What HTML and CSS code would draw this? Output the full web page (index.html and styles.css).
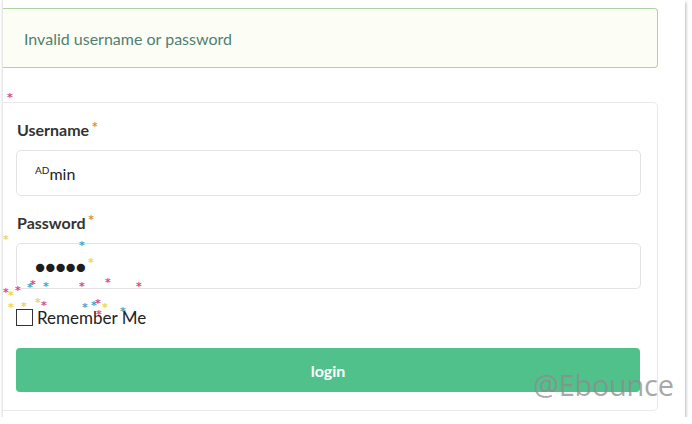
FILE: index.html
```html
<!DOCTYPE html>
<html>
<head>
<meta charset="utf-8">
<link rel="stylesheet" href="styles.css">
</head>
<body>
<div class="page">
  <div class="alert">Invalid username or password</div>
  <div class="card">
    <div class="field">
      <label class="label">Username<span class="req">*</span></label>
      <div class="input"><sup class="sup">AD</sup>min</div>
    </div>
    <div class="field field-2">
      <label class="label">Password<span class="req">*</span></label>
      <div class="input dots">●●●●●</div>
    </div>
    <div class="remember"><span class="box"></span><span class="rtext">Remember Me</span></div>
    <button class="btn">login</button>
  </div>
  <div class="watermark">@Ebounce</div>
  <span class="s pink" style="left:4px;top:92px">*</span>
  <span class="s yellow" style="left:0px;top:234px">*</span>
  <span class="s blue" style="left:76px;top:240px">*</span>
  <span class="s yellow" style="left:85px;top:257px">*</span>
  <span class="s pink" style="left:102px;top:277px">*</span>
  <span class="s pink" style="left:133px;top:281px">*</span>
  <span class="s pink" style="left:0px;top:287px">*</span>
  <span class="s yellow" style="left:5px;top:290px">*</span>
  <span class="s pink" style="left:12px;top:285px">*</span>
  <span class="s blue" style="left:24px;top:282px">*</span>
  <span class="s pink" style="left:27px;top:279px">*</span>
  <span class="s blue" style="left:40px;top:281px">*</span>
  <span class="s pink" style="left:76px;top:281px">*</span>
  <span class="s yellow" style="left:5px;top:302px">*</span>
  <span class="s yellow" style="left:18px;top:301px">*</span>
  <span class="s yellow" style="left:32px;top:297px">*</span>
  <span class="s pink" style="left:38px;top:300px">*</span>
  <span class="s blue" style="left:79px;top:302px">*</span>
  <span class="s blue" style="left:88px;top:300px">*</span>
  <span class="s yellow" style="left:99px;top:302px">*</span>
  <span class="s pink" style="left:92px;top:298px">*</span>
  <span class="s pink" style="left:93px;top:309px">*</span>
  <span class="s blue" style="left:117px;top:306px">*</span>
</div>
</body>
</html>
```
FILE: styles.css
```css
html, body {
  margin: 0;
  padding: 0;
  background: #ffffff;
}
body {
  font-family: Lato, "Open Sans", sans-serif;
}
.page {
  position: relative;
  margin-left: 2px;
  width: 683px;
  height: 417px;
  padding-top: 8px;
  box-sizing: border-box;
  border-left: 1px solid #e8e8e8;
  box-shadow: 1px 2px 3px rgba(0, 0, 0, 0.28);
}
.alert {
  margin-right: 27px;
  height: 60px;
  box-sizing: border-box;
  border: 1px solid #add4a0;
  border-left: none;
  border-radius: 0 4px 4px 0;
  background: #fcfef5;
  color: #4f7e72;
  font-size: 16px;
  padding-left: 21px;
  display: flex;
  align-items: center;
}
.card {
  margin-top: 34px;
  margin-right: 27px;
  height: 309px;
  box-sizing: border-box;
  border: 1px solid #e9e9e9;
  border-left: none;
  border-radius: 0 5px 5px 0;
  padding: 17px 16px 0 13px;
}
.field {
  display: flex;
  flex-direction: column;
}
.field-2 {
  margin-top: 17px;
}
.label {
  font-weight: bold;
  font-size: 16px;
  color: #333333;
  line-height: 20px;
  height: 20px;
  margin-left: 1px;
}
.req {
  color: #e08a3c;
  font-family: "DejaVu Sans", sans-serif;
  font-weight: bold;
  font-size: 10px;
  position: relative;
  top: -6px;
  margin-left: 3px;
}
.input {
  margin-top: 10px;
  height: 46px;
  box-sizing: border-box;
  border: 1px solid #e3e3e3;
  border-radius: 5px;
  padding-left: 18px;
  display: flex;
  align-items: center;
  font-size: 16px;
  color: #222222;
}
.sup {
  font-size: 10px;
  align-self: flex-start;
  margin-top: 13px;
}
.dots {
  font-size: 17px;
  color: #1e1e1e;
}
.remember {
  margin-top: 18px;
  height: 20px;
  display: flex;
  align-items: center;
}
.box {
  width: 17px;
  height: 17px;
  box-sizing: border-box;
  border: 1.5px solid #333333;
  margin-right: 4px;
}
.rtext {
  font-size: 17px;
  color: #222222;
}
.btn {
  display: block;
  margin-top: 21px;
  width: 624px;
  height: 44px;
  border: none;
  border-radius: 4px;
  background: #51c18c;
  color: #ffffff;
  font-family: Lato, sans-serif;
  font-weight: bold;
  font-size: 16px;
}
.watermark {
  position: absolute;
  left: 530px;
  top: 365px;
  font-family: "Open Sans", sans-serif;
  font-size: 29px;
  color: rgba(140, 140, 140, 0.75);
  letter-spacing: -0.3px;
}
.s {
  position: absolute;
  font-family: "DejaVu Sans", sans-serif;
  font-weight: bold;
  font-size: 11px;
  line-height: 11px;
  opacity: 0.9;
}
.pink { color: #e0336e; }
.yellow { color: #e8d24a; }
.blue { color: #2e9cc0; }
```
